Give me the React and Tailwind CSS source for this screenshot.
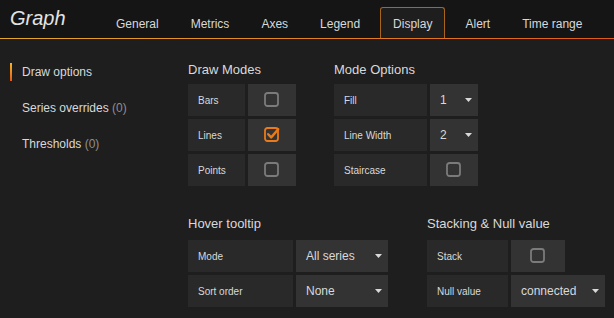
import React from 'react'

const tabs = ['General', 'Metrics', 'Axes', 'Legend', 'Display', 'Alert', 'Time range']

function Checkbox({ checked }) {
  return (
    <svg width="16" height="16" viewBox="0 0 16 16">
      <rect x="1" y="1" width="13" height="13" rx="2.5" fill="none" stroke={checked ? '#eb7b18' : '#7b7b7b'} strokeWidth="1.8" />
      {checked && <polyline points="4.2,7.2 7.2,10.4 14.2,2.2" fill="none" stroke="#eb7b18" strokeWidth="2.4" strokeLinecap="round" strokeLinejoin="round" />}
    </svg>
  )
}

function Caret() {
  return (
    <svg width="7" height="4" viewBox="0 0 7 4">
      <polygon points="0,0 7,0 3.5,4" fill="#d8d9da" />
    </svg>
  )
}

function Row({ label, labelW, valueW, children, select }) {
  return (
    <div className="flex gap-[3px] h-[32px]">
      <div className="bg-[#292929] flex items-center pl-[10px] text-[10px] text-[#d8d9da]" style={{ width: labelW }}>
        {label}
      </div>
      <div
        className={`bg-[#333333] flex items-center ${select ? 'justify-between pl-[10px] pr-[6px] text-[12px] text-[#d8d9da]' : 'justify-center'}`}
        style={{ width: valueW }}
      >
        {children}
      </div>
    </div>
  )
}

function Select({ value }) {
  return (
    <>
      <span>{value}</span>
      <Caret />
    </>
  )
}

export default function App() {
  return (
    <div className="w-[614px] h-[318px] bg-[#1f1e1e] font-['Liberation_Sans',Arial,sans-serif] text-[#d8d9da] overflow-hidden">
      {/* Header */}
      <div className="h-[38px] bg-[#151515] flex items-end">
        <div className="pl-[10px] self-center text-[20px] italic leading-[24px] text-[#e3e3e3] w-[100px] mb-[2px]">Graph</div>
        <div className="flex items-end h-full">
          {tabs.map((t) => (
            <div
              key={t}
              className={`mx-[4px] px-[12px] pt-[2px] h-[31px] flex items-center text-[12px] ${
                t === 'Display' ? 'bg-[#1f1e1e] border border-b-0 border-[#a8651e] rounded-t-[3px] px-[11px]' : ''
              }`}
            >
              {t}
            </div>
          ))}
        </div>
      </div>
      <div className="h-[1px] bg-gradient-to-r from-[#e5a72b] to-[#e0591c]" />

      <div className="flex">
        {/* Sidebar */}
        <div className="w-[188px] pl-[10px] pt-[15px] text-[12px]">
          <div className="h-[36px] flex items-center">
            <div className="w-[2px] h-[18px] bg-gradient-to-b from-[#f4b42b] to-[#e55a18]" />
            <span className="pl-[10px]">Draw options</span>
          </div>
          <div className="h-[36px] flex items-center pl-[12px]">
            Series overrides&nbsp;<span className="text-[#8e8e8e]">(0)</span>
          </div>
          <div className="h-[36px] flex items-center pl-[12px]">
            Thresholds&nbsp;<span className="text-[#8e8e8e]">(0)</span>
          </div>
        </div>

        {/* Main */}
        <div className="pt-[21px]">
          <div className="flex gap-[38px]">
            <div>
              <div className="text-[13px] leading-[20px] mb-[4px]">Draw Modes</div>
              <div className="flex flex-col gap-[3px]">
                <Row label="Bars" labelW={57} valueW={48}><Checkbox /></Row>
                <Row label="Lines" labelW={57} valueW={48}><Checkbox checked /></Row>
                <Row label="Points" labelW={57} valueW={48}><Checkbox /></Row>
              </div>
            </div>
            <div>
              <div className="text-[13px] leading-[20px] mb-[4px]">Mode Options</div>
              <div className="flex flex-col gap-[3px]">
                <Row label="Fill" labelW={93} valueW={48} select><Select value="1" /></Row>
                <Row label="Line Width" labelW={93} valueW={48} select><Select value="2" /></Row>
                <Row label="Staircase" labelW={93} valueW={48}><Checkbox /></Row>
              </div>
            </div>
          </div>

          <div className="flex gap-[39px] mt-[28px]">
            <div>
              <div className="text-[13px] leading-[20px] mb-[6px]">Hover tooltip</div>
              <div className="flex flex-col gap-[3px]">
                <Row label="Mode" labelW={105} valueW={92} select><Select value="All series" /></Row>
                <Row label="Sort order" labelW={105} valueW={92} select><Select value="None" /></Row>
              </div>
            </div>
            <div>
              <div className="text-[13px] leading-[20px] mb-[6px]">Stacking &amp; Null value</div>
              <div className="flex flex-col gap-[3px]">
                <Row label="Stack" labelW={81} valueW={54}><Checkbox /></Row>
                <Row label="Null value" labelW={81} valueW={94} select><Select value="connected" /></Row>
              </div>
            </div>
          </div>
        </div>
      </div>
    </div>
  )
}
